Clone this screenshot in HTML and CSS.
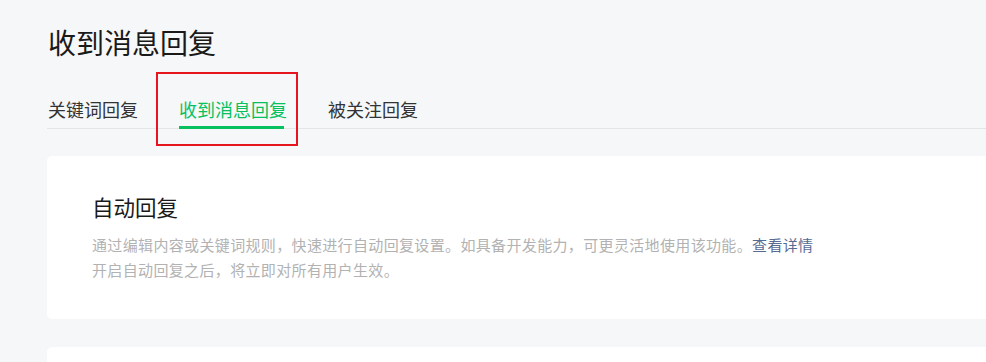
FILE: index.html
```html
<!DOCTYPE html>
<html lang="zh-CN">
<head>
    <meta charset="UTF-8">
    <meta name="viewport" content="width=device-width, initial-scale=1.0">
    <title>收到消息回复</title>
    <link rel="stylesheet" href="styles.css">
</head>
<body>
    <div class="page">
        <h1 class="page-title">收到消息回复</h1>
        <div class="tabs">
            <a class="tab">关键词回复</a>
            <a class="tab tab-active">收到消息回复<span class="mark"></span></a>
            <a class="tab">被关注回复</a>
        </div>

        <div class="card">
            <h2 class="card-title">自动回复</h2>
            <p class="card-desc">通过编辑内容或关键词规则，快速进行自动回复设置。如具备开发能力，可更灵活地使用该功能。<a class="link">查看详情</a><br>开启自动回复之后，将立即对所有用户生效。</p>
        </div>

        <div class="card card-next"></div>
    </div>
</body>
</html>
```

FILE: styles.css
```css
body {
    margin: 0;
    padding: 0;
    background: #f6f7f9;
    font-family: "Noto Sans CJK SC", "Noto Sans", sans-serif;
    overflow: hidden;
}
.page {
    width: 1100px;
    padding: 22px 0 0 47px;
}
.page-title {
    margin: 0 0 0 1px;
    font-size: 28px;
    line-height: 40px;
    font-weight: 400;
    color: #1a1a1a;
}
.tabs {
    display: flex;
    gap: 41px;
    margin-top: 34px;
    border-bottom: 1px solid #e4e5e7;
    padding-left: 1px;
}
.tab {
    position: relative;
    font-size: 18px;
    line-height: 26px;
    padding-bottom: 6px;
    color: #333;
    cursor: pointer;
}
.tab-active {
    color: #07c160;
}
.tab-active::after {
    content: "";
    position: absolute;
    left: 0;
    right: 3px;
    bottom: -1px;
    height: 3px;
    background: #07c160;
}
.mark {
    position: absolute;
    left: -23px;
    top: -24px;
    width: 138px;
    height: 70px;
    border: 2px solid #e6161e;
}
.card {
    margin-top: 27px;
    background: #fff;
    border-radius: 5px;
    padding: 36px 45px 37px;
}
.card-title {
    margin: 0;
    font-size: 21.5px;
    line-height: 30px;
    font-weight: 400;
    color: #1a1a1a;
}
.card-desc {
    margin: 11px 0 0;
    font-size: 15px;
    line-height: 24.5px;
    letter-spacing: 0.35px;
    color: #b2b2b2;
}
.link {
    color: #576b95;
    cursor: pointer;
}
.card-next {
    margin-top: 28px;
    height: 60px;
    padding: 0;
}
```
